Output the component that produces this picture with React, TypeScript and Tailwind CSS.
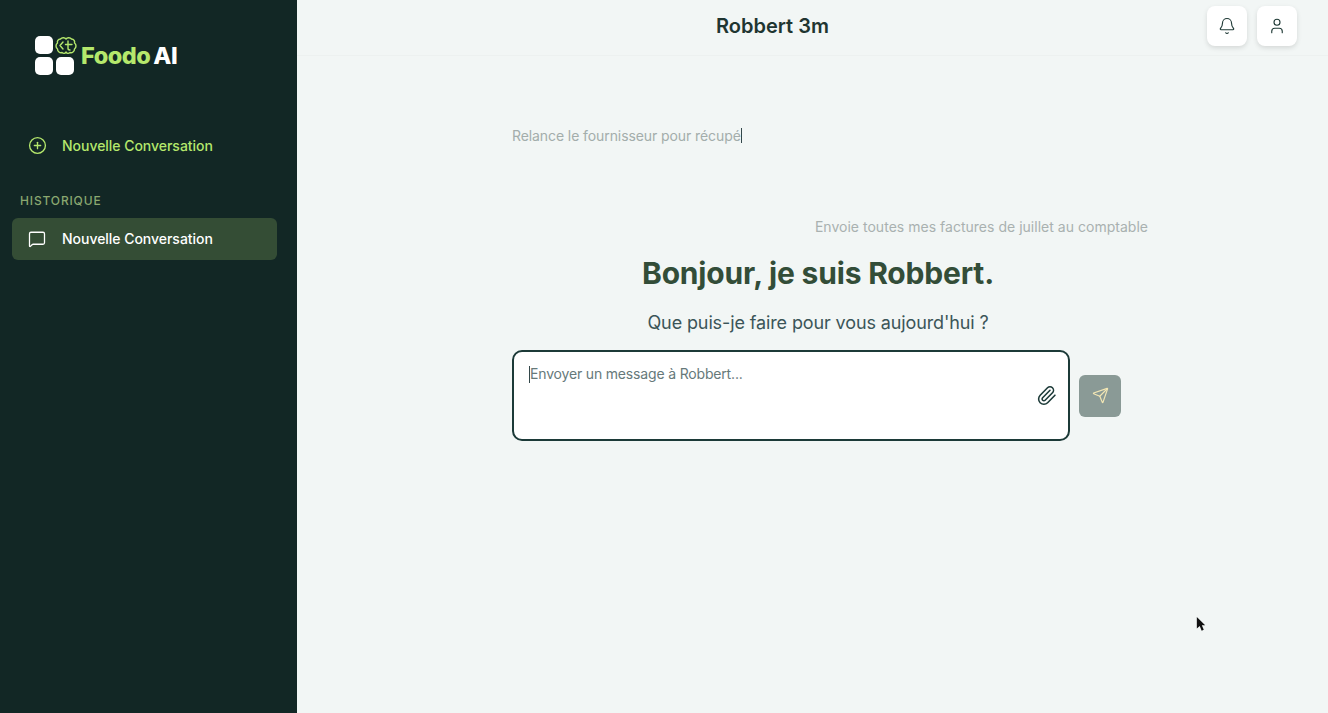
import { Bell, CirclePlus, MessageSquare, Paperclip, Send, User } from "lucide-react";

function Logo() {
  return (
    <div className="flex items-center">
      <svg width="46" height="42" viewBox="0 0 46 42" fill="none" className="shrink-0">
        <rect x="0" y="2" width="18" height="18" rx="5" fill="#fff" />
        <rect x="0" y="23" width="18" height="18" rx="5" fill="#fff" />
        <rect x="21" y="23" width="18" height="18" rx="5" fill="#fff" />
        <path
          d="M31 5C30 3.500 27 3 25.500 5C23 5 22 7.500 22.500 9C20.500 10.500 20.500 13.500 22.500 15C22.500 17.500 25 19.500 27 18.500C28.500 20 30.500 19.500 31 18C31.500 19.500 33.500 20 35 18.500C37 19.500 39.500 17.500 39.500 15C41.500 13.500 41.500 10.500 39.500 9C40 7.500 39 5 36.500 5C35 3 32 3.500 31 5Z"
          stroke="#b5e86c"
          strokeWidth="1.400"
          strokeLinejoin="round"
        />
        <path d="M28 8L25 11.500L28 15M33 7V14.500C33 15.500 33.700 16 35 16M30.500 10.500H37" stroke="#b5e86c" strokeWidth="1.400" strokeLinecap="round" strokeLinejoin="round" />
      </svg>
      <span className="mt-0.5 text-[23.500px] leading-none font-extrabold tracking-[-0.5px]">
        <span className="text-[#b5e86c]">Foodo</span>
        <span className="ml-[3px] text-white">AI</span>
      </span>
    </div>
  );
}

function HeaderButton({ children }: { children: React.ReactNode }) {
  return (
    <button className="flex h-[40px] w-[40px] items-center justify-center rounded-lg bg-white text-[#1f3a36] shadow-[0_2px_5px_rgba(0,0,0,0.12)]">
      {children}
    </button>
  );
}

export default function App() {
  return (
    <div className="relative flex h-[713px] w-[1328px] overflow-hidden bg-[#f2f6f5] font-['Inter',sans-serif]">
      <aside className="flex w-[297px] shrink-0 flex-col bg-[#122725]">
        <div className="pl-[35px] pt-[34px]">
          <Logo />
        </div>
        <button className="ml-[28px] mt-[59px] flex items-center gap-[15px] text-left text-[#b5e86c]">
          <CirclePlus size={19} strokeWidth={1.700} />
          <span className="text-[14px] font-medium tracking-[-0.03px]">Nouvelle Conversation</span>
        </button>
        <div className="ml-[20px] mt-[37px] text-[12px] font-medium leading-[16px] tracking-[0.85px] text-[#8aa870]">
          HISTORIQUE
        </div>
        <div className="ml-3 mt-[9px] flex h-[42px] w-[265px] items-center gap-[16px] rounded-md bg-[#344d35] pb-px pl-[16px] text-white">
          <MessageSquare size={18} strokeWidth={1.700} />
          <span className="text-[14px] font-medium tracking-[-0.03px]">Nouvelle Conversation</span>
        </div>
      </aside>

      <main className="flex min-w-0 flex-1 flex-col">
        <header className="flex h-[56px] shrink-0 items-center border-b border-[#edf1f0] pb-[3px] pl-[41px] pr-[31px]">
          <h1 className="flex-1 text-center text-[20px] font-semibold tracking-[0px] text-[#1f3531]">Robbert 3m</h1>
          <div className="flex gap-[10px]">
            <HeaderButton>
              <Bell size={18} strokeWidth={1.500} />
            </HeaderButton>
            <HeaderButton>
              <User size={18} strokeWidth={1.500} />
            </HeaderButton>
          </div>
        </header>

        <div className="flex flex-col pl-[215px]">
          <div className="mt-[69px] flex h-[20px] items-center text-[14px] tracking-[-0.09px] text-[#a3adab]">
            <span>Relance le fournisseur pour récupé</span>
            <span className="h-[15px] w-px bg-[#33474a]" />
          </div>

          <div className="mt-[72px] w-[636px] text-right text-[14px] leading-[20px] tracking-[0.02px] text-[#a9b1b0]">
            Envoie toutes mes factures de juillet au comptable
          </div>

          <h2 className="mt-[16px] w-[612px] text-center text-[30px] font-bold leading-[40px] tracking-[-0.18px] text-[#334d38]">
            Bonjour, je suis Robbert.
          </h2>

          <p className="mt-[16px] w-[612px] text-center text-[18px] leading-[28px] tracking-[-0.12px] text-[#3b5558]">
            Que puis-je faire pour vous aujourd'hui ?
          </p>

          <div className="mt-[13px] flex items-center gap-[9px]">
            <div className="relative h-[91px] w-[558px] rounded-[10px] border-2 border-[#1c3a38] bg-white pl-[15px] pt-[12px]">
              <div className="flex items-center text-[14px] leading-[20px] tracking-[-0.17px] text-[#66797a]">
                <span className="h-[17px] w-px bg-[#33474a]" />
                Envoyer un message à Robbert...
              </div>
              <Paperclip size={21} strokeWidth={1.800} className="absolute right-[11px] top-[33px] text-[#1c3a38]" />
            </div>
            <button className="flex h-[42px] w-[42px] items-center justify-center rounded-md bg-[#8a9a96] text-[#f2e6b4]">
              <Send size={17} strokeWidth={1.700} />
            </button>
          </div>
        </div>
      </main>

      <svg width="10" height="16" viewBox="0 0 12 19" className="absolute left-[1196px] top-[616px]">
        <path d="M1 1v14l3.500-3.200 2.300 5.700 2.500-1-2.300-5.400H11z" fill="#111" />
      </svg>
    </div>
  );
}
